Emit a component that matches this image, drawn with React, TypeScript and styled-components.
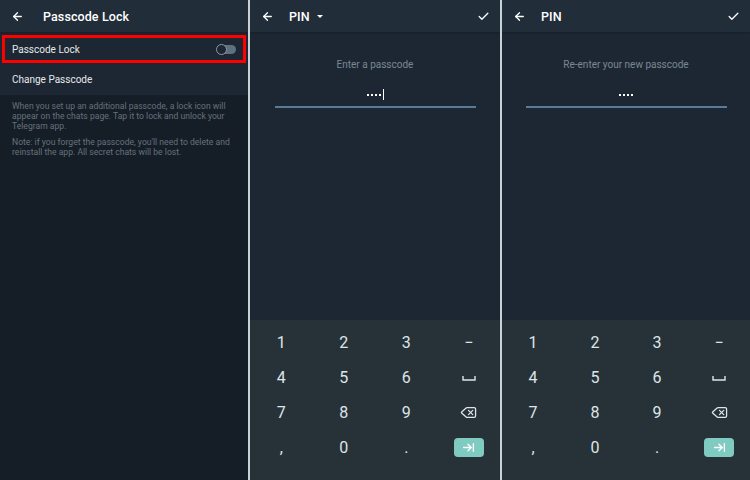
import styled, { createGlobalStyle } from "styled-components";
import { ArrowLeft, Check, Delete, ArrowRightToLine } from "lucide-react";

const GlobalStyle = createGlobalStyle`
  html, body {
    margin: 0;
    padding: 0;
    background: #ffffff;
    font-family: Roboto, "Noto Sans", Arial, sans-serif;
  }
`;

const Screens = styled.div`
  width: 750px;
  height: 480px;
  display: grid;
  grid-template-columns: 248px 250px 248px;
  column-gap: 2px;
  background: #c9d0d6;
  overflow: hidden;
`;

const Phone = styled.div<{ $bg: string }>`
  display: flex;
  flex-direction: column;
  height: 480px;
  background: ${(p) => p.$bg};
  overflow: hidden;
`;

const Header = styled.div`
  height: 32px;
  flex-shrink: 0;
  display: flex;
  align-items: center;
  padding: 0 10px 0 11px;
  background: #222d3a;
  color: #ffffff;
  box-shadow: 0 1px 2px rgba(0, 0, 0, 0.25);
  position: relative;
  z-index: 1;
`;

const Title = styled.div<{ $gap: number }>`
  margin-left: ${(p) => p.$gap}px;
  font-size: 12.5px;
  font-weight: 500;
  letter-spacing: 0.1px;
  display: flex;
  align-items: center;
  gap: 7px;
`;

const Caret = styled.span`
  width: 0;
  height: 0;
  border-left: 3px solid transparent;
  border-right: 3px solid transparent;
  border-top: 3px solid #ffffff;
  margin-top: 1px;
`;

const Spacer = styled.div`
  flex: 1;
`;

const List = styled.div`
  background: #1d2733;
  display: flex;
  flex-direction: column;
  padding: 3px 0 0;
`;

const Row = styled.div<{ $framed?: boolean }>`
  margin: 0 2px;
  padding: 0 7px;
  display: flex;
  align-items: center;
  justify-content: space-between;
  font-size: 10px;
  color: #e6e9ec;
  border: 3px solid ${(p) => (p.$framed ? "#ff0000" : "transparent")};
  box-sizing: border-box;
  height: ${(p) => (p.$framed ? 28 : 32)}px;
`;

const Toggle = styled.div`
  width: 19px;
  height: 9px;
  border-radius: 5px;
  background: #5f7081;
  position: relative;
`;

const Knob = styled.span`
  position: absolute;
  left: -1px;
  top: -1px;
  width: 9px;
  height: 9px;
  border-radius: 50%;
  border: 1px solid #8d99a5;
  background: #1d2733;
`;

const Info = styled.div`
  flex: 1;
  padding: 7px 10px 0 12px;
  background: #151e27;
  color: #66717d;
  font-size: 8.6px;
  line-height: 9.8px;
`;

const Para = styled.p`
  margin: 0 0 7px;
`;

const Body = styled.div`
  flex: 1;
  display: flex;
  flex-direction: column;
  align-items: center;
  padding-top: 27px;
  background: #1d2733;
`;

const Prompt = styled.div`
  font-size: 10px;
  color: #7a8794;
  height: 14px;
`;

const Field = styled.div`
  margin-top: 16px;
  width: 201px;
  height: 17px;
  border-bottom: 2px solid #5a7a98;
  display: flex;
  justify-content: center;
  align-items: flex-start;
  gap: 1px;
`;

const Dots = styled.span`
  display: flex;
  gap: 2px;
  padding-top: 5px;
`;

const Dot = styled.span`
  width: 2px;
  height: 2px;
  background: #ffffff;
`;

const Cursor = styled.span`
  width: 1px;
  height: 11px;
  background: #ffffff;
  margin-left: 1px;
`;

const Keyboard = styled.div`
  height: 160px;
  flex-shrink: 0;
  background: #263238;
  display: grid;
  grid-template-columns: repeat(4, 1fr);
  grid-auto-rows: 35px;
  padding-top: 5px;
  box-sizing: border-box;
`;

const Key = styled.div`
  display: flex;
  align-items: center;
  justify-content: center;
  color: #dfe4e8;
  font-size: 16px;
  font-weight: 400;
`;

const EnterKey = styled.div`
  width: 30px;
  height: 19px;
  border-radius: 4px;
  background: #7fcbc1;
  display: flex;
  align-items: center;
  justify-content: center;
  color: #ffffff;
`;

const SpaceGlyph = () => (
  <svg width="14" height="8" viewBox="0 0 14 8">
    <path d="M1 2 V6 H13 V2" fill="none" stroke="#dfe4e8" strokeWidth="1.4" />
  </svg>
);

const Pad = () => (
  <Keyboard>
    <Key>1</Key>
    <Key>2</Key>
    <Key>3</Key>
    <Key>−</Key>
    <Key>4</Key>
    <Key>5</Key>
    <Key>6</Key>
    <Key>
      <SpaceGlyph />
    </Key>
    <Key>7</Key>
    <Key>8</Key>
    <Key>9</Key>
    <Key>
      <Delete size={17} strokeWidth={1.8} />
    </Key>
    <Key>,</Key>
    <Key>0</Key>
    <Key>.</Key>
    <Key>
      <EnterKey>
        <ArrowRightToLine size={13} strokeWidth={2.4} />
      </EnterKey>
    </Key>
  </Keyboard>
);

const PinScreen = ({
  prompt,
  caret,
  cursor,
}: {
  prompt: string;
  caret?: boolean;
  cursor?: boolean;
}) => (
  <Phone $bg="#1d2733">
    <Header>
      <ArrowLeft size={13} strokeWidth={2.4} />
      <Title $gap={15}>
        PIN
        {caret && <Caret />}
      </Title>
      <Spacer />
      <Check size={13} strokeWidth={2.4} />
    </Header>
    <Body>
      <Prompt>{prompt}</Prompt>
      <Field>
        <Dots>
          <Dot />
          <Dot />
          <Dot />
          <Dot />
        </Dots>
        {cursor && <Cursor />}
      </Field>
    </Body>
    <Pad />
  </Phone>
);

export default function App() {
  return (
    <>
      <GlobalStyle />
      <Screens>
        <Phone $bg="#151e27">
          <Header>
            <ArrowLeft size={13} strokeWidth={2.4} />
            <Title $gap={19}>Passcode Lock</Title>
          </Header>
          <List>
            <Row $framed>
              Passcode Lock
              <Toggle>
                <Knob />
              </Toggle>
            </Row>
            <Row>Change Passcode</Row>
          </List>
          <Info>
            <Para>
              When you set up an additional passcode, a lock icon will appear on
              the chats page. Tap it to lock and unlock your Telegram app.
            </Para>
            <Para>
              Note: if you forget the passcode, you'll need to delete and
              reinstall the app. All secret chats will be lost.
            </Para>
          </Info>
        </Phone>
        <PinScreen prompt="Enter a passcode" caret cursor />
        <PinScreen prompt="Re-enter your new passcode" />
      </Screens>
    </>
  );
}
